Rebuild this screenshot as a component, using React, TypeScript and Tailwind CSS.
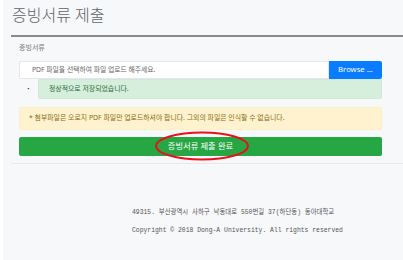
import React from 'react'

const kr = { fontFamily: '"Noto Sans", "Noto Sans CJK KR", sans-serif' }
const mono = { fontFamily: '"Liberation Mono", "Noto Sans CJK KR", monospace' }

export default function App() {
  return (
    <div className="min-h-[260px] w-[403px] bg-[#f7f8fa] border-l-[3px] border-white" style={kr}>
      <h1 className="pl-[9px] pt-[4px] text-[16px] leading-[22px] font-light text-[#5f6368]">증빙서류 제출</h1>
      <div className="ml-[8px] mt-[9px] h-[2px] bg-[#8a8a8a]" />

      <div className="ml-[16px] mr-[21px]">
        <p className="mt-[7px] text-[7px] leading-[8px] text-[#777]">증빙서류</p>

        <div className="mt-[9px] flex h-[18px]">
          <div className="flex flex-1 items-center rounded-l-[2px] border border-[#e3e6ea] bg-white pl-[12px] text-[6.8px] text-[#666]">
            PDF 파일을 선택하여 파일 업로드 해주세요.
          </div>
          <div className="flex w-[53px] items-center justify-center rounded-r-[2px] bg-[#0a7cff] text-[7.7px] text-white">
            Browse ...
          </div>
        </div>

        <div className="flex h-[20px]">
          <div className="flex w-[19px] items-center justify-center text-[6px] text-[#333]">•</div>
          <div className="flex flex-1 items-center rounded-b-[2px] border border-[#d0e8d6] bg-[#d6eedc] pl-[10px] text-[6.9px] text-[#2d6b3a]">
            정상적으로 저장되었습니다.
          </div>
        </div>

        <div className="mt-[8px] flex h-[23px] items-center rounded-[2px] border border-[#fdeec3] bg-[#fff3cf] pl-[9px] text-[6.9px] text-[#8a6a14]">
          * 첨부파일은 오로지 PDF 파일만 업로드하셔야 합니다. 그외의 파일은 인식할 수 없습니다.
        </div>

        <div className="relative mt-[7px] flex h-[19px] items-center justify-center rounded-[2px] bg-[#27a744] text-[8.3px] text-white">
          증빙서류 제출 완료
          <svg className="absolute left-[135px] top-[-6px]" width="96" height="30" viewBox="0 0 96 30">
            <ellipse cx="48" cy="15" rx="46" ry="13.5" fill="none" stroke="#e8101a" strokeWidth="2" />
          </svg>
        </div>
      </div>

      <div className="ml-[8px] mt-[7px] h-[1px] bg-[#e6e8ec]" />

      <div className="pl-[129px] pt-[40px] text-[6.4px] text-[#555]" style={mono}>
        <p className="h-[18px] leading-[18px]">49315. 부산광역시 사하구 낙동대로 550번길 37(하단동) 동아대학교</p>
        <p className="h-[18px] leading-[18px]">Copyright © 2018 Dong-A University. All rights reserved</p>
      </div>
    </div>
  )
}
